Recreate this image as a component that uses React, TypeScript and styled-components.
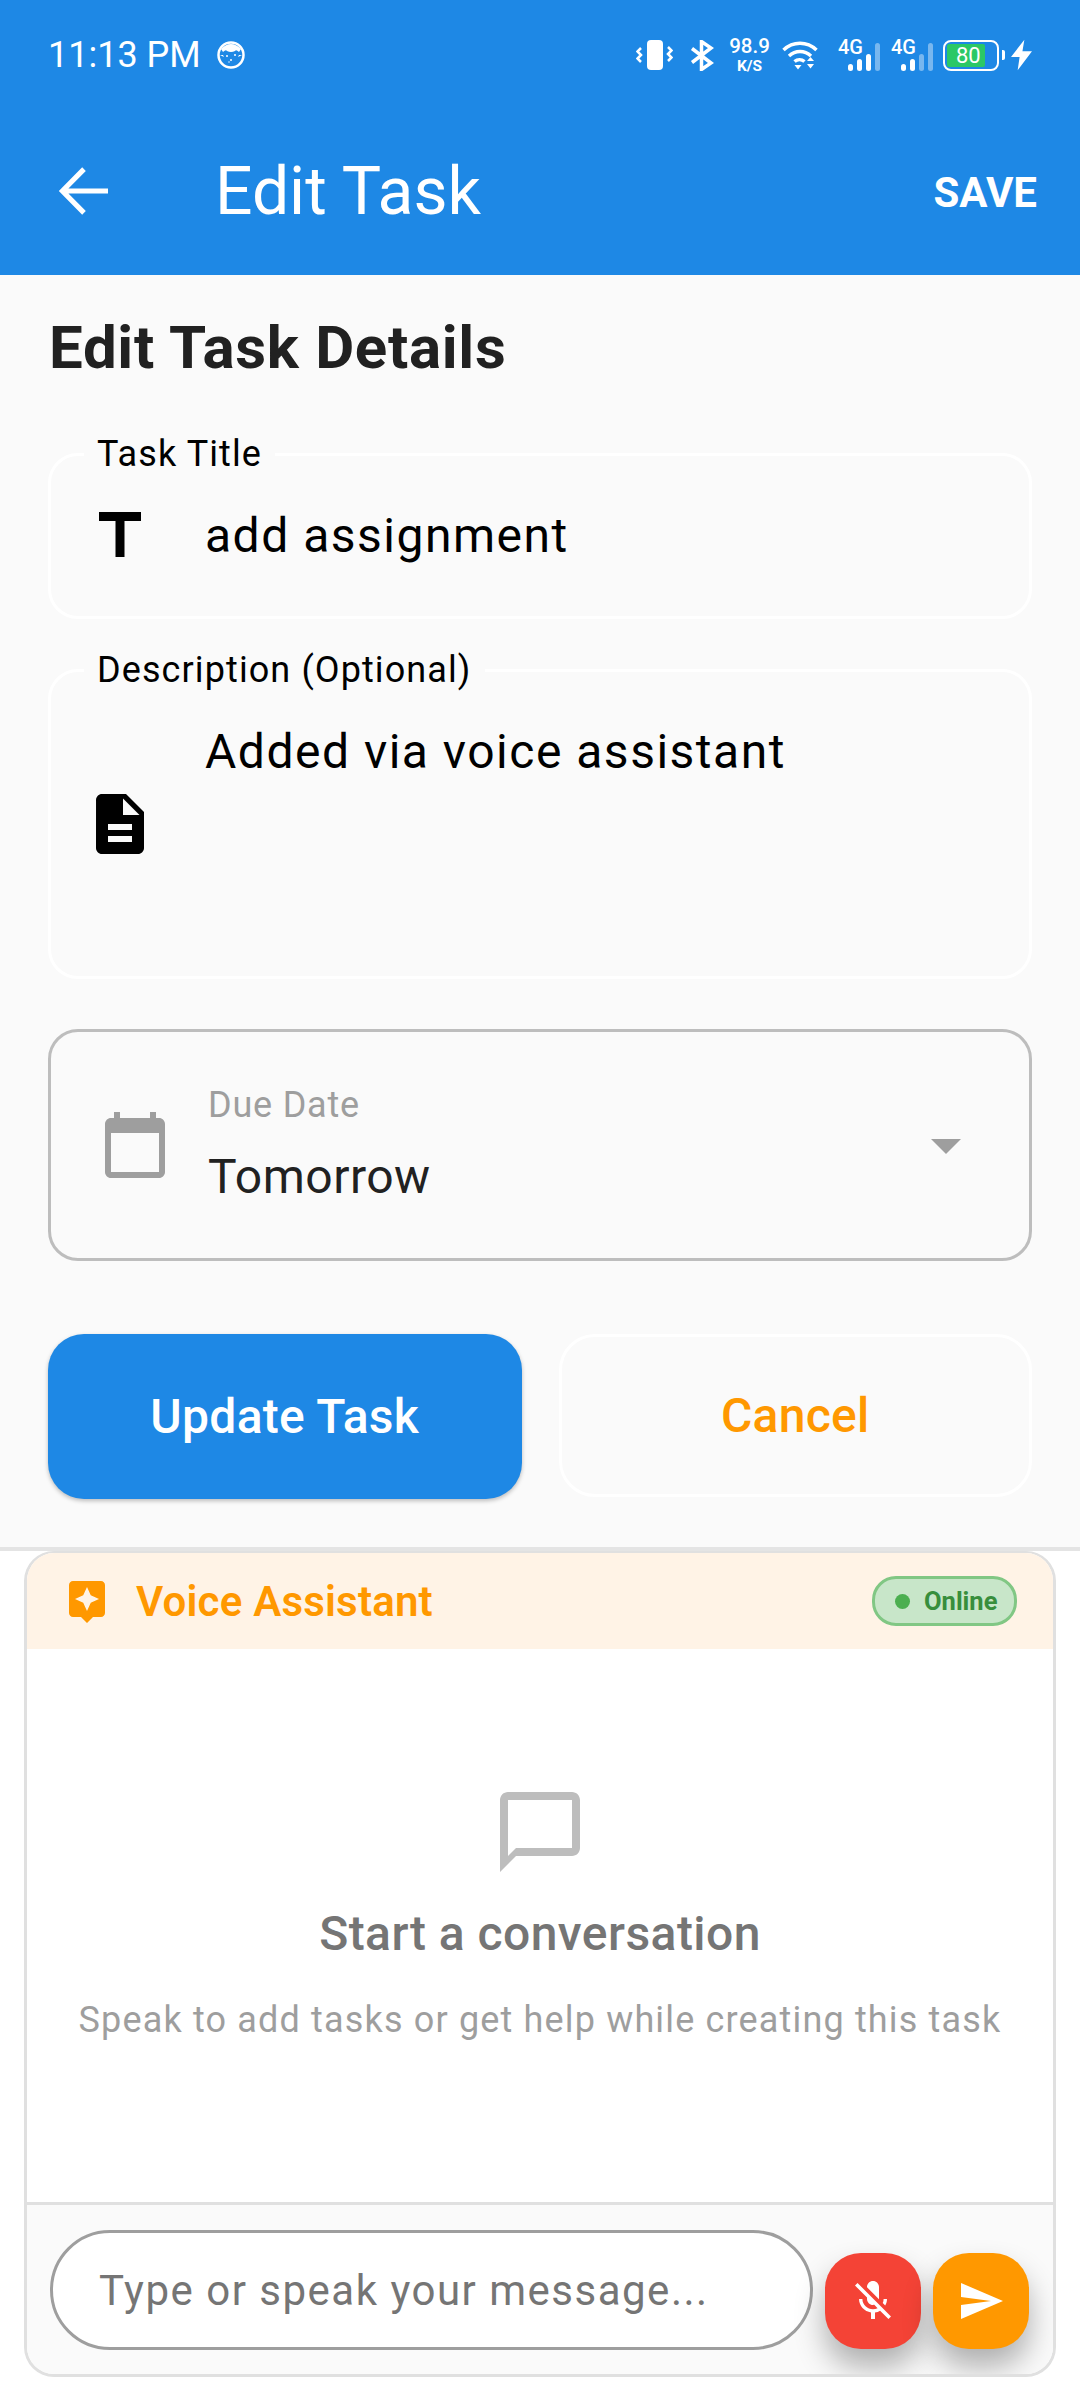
import styled, { createGlobalStyle } from 'styled-components';

const GlobalStyle = createGlobalStyle`
  html, body {
    margin: 0;
    padding: 0;
    background: #ffffff;
    font-family: Roboto, "Liberation Sans", sans-serif;
  }
  * { box-sizing: border-box; }
`;

const S = {
  Page: styled.div`
    width: 1080px;
    height: 2400px;
    display: flex;
    flex-direction: column;
    overflow: hidden;
    background: #ffffff;
  `,
  Header: styled.header`
    height: 275px;
    background: #1e88e5;
    color: #ffffff;
  `,
  StatusBar: styled.div`
    height: 107px;
    padding: 3px 48px 0 48px;
    display: flex;
    align-items: center;
    justify-content: space-between;
  `,
  StatusLeft: styled.div`
    display: flex;
    align-items: center;
    gap: 16px;
  `,
  Time: styled.span`
    font-size: 36px;
  `,
  StatusRight: styled.div`
    display: flex;
    align-items: center;
  `,
  Speed: styled.div`
    width: 39px;
    margin: 0 13px 0 16px;
    display: flex;
    flex-direction: column;
    align-items: center;
    font-weight: 500;
    line-height: 1;
  `,
  SpeedValue: styled.span`
    font-size: 20.5px;
  `,
  SpeedUnit: styled.span`
    font-size: 15.5px;
    font-weight: 700;
    margin-top: 3px;
  `,
  Signal: styled.div<{ $gap: number }>`
    position: relative;
    width: 42px;
    height: 32px;
    margin-left: ${p => p.$gap}px;
  `,
  SignalLabel: styled.span`
    position: absolute;
    top: 0;
    left: 0;
    font-size: 20px;
    font-weight: 500;
    line-height: 17px;
  `,
  Bars: styled.div`
    position: absolute;
    right: 0;
    bottom: 0;
    display: flex;
    align-items: flex-end;
    gap: 4px;
  `,
  Bar: styled.i<{ $height: number; $dim?: boolean }>`
    display: block;
    width: 5px;
    height: ${p => p.$height}px;
    border-radius: 3px;
    background: ${p => (p.$dim ? 'rgba(255,255,255,0.4)' : '#ffffff')};
  `,
  Battery: styled.div`
    width: 56px;
    height: 31px;
    margin-left: 10px;
    padding: 2px;
    border: 2px solid #ffffff;
    border-radius: 8px;
  `,
  BatteryFill: styled.div`
    width: 38px;
    height: 100%;
    padding-left: 9px;
    background: #2bc866;
    border-radius: 2px;
    font-size: 22px;
    line-height: 23px;
  `,
  BatteryNub: styled.i`
    display: block;
    width: 3px;
    height: 10px;
    margin: 0 6px 0 3px;
    border-radius: 0 2px 2px 0;
    background: #ffffff;
  `,
  Toolbar: styled.div`
    height: 168px;
    padding: 0 43px 0 48px;
    display: flex;
    align-items: center;
  `,
  Title: styled.h1`
    flex: 1;
    margin: 0 0 0 95px;
    font-size: 66px;
    font-weight: 400;
  `,
  Save: styled.span`
    margin-top: 2px;
    font-size: 42px;
    font-weight: 700;
  `,
  Form: styled.main`
    height: 1276px;
    padding: 33px 48px 0;
    background: #fafafa;
    border-bottom: 4px solid #e4e4e4;
  `,
  Heading: styled.h2`
    height: 80px;
    margin: 0 0 65px 1px;
    font-size: 60px;
    font-weight: 700;
    line-height: 80px;
    letter-spacing: 0.7px;
    color: #212121;
  `,
  Field: styled.div<{ $height: number }>`
    position: relative;
    height: ${p => p.$height}px;
    margin-bottom: 50px;
    padding: 0 33px;
    display: flex;
    align-items: center;
    gap: 50px;
    border: 3px solid #ffffff;
    border-radius: 30px;
  `,
  FieldLabel: styled.label`
    position: absolute;
    top: -22px;
    left: 33px;
    padding: 0 13px;
    background: #fafafa;
    font-size: 36px;
    line-height: 40px;
    letter-spacing: 1.1px;
    color: #000000;
  `,
  FieldValue: styled.div<{ $top?: boolean }>`
    align-self: ${p => (p.$top ? 'flex-start' : 'center')};
    margin-top: ${p => (p.$top ? '50px' : '0')};
    font-size: 48px;
    line-height: 60px;
    letter-spacing: 1.5px;
    color: #000000;
  `,
  FieldIcon: styled.svg`
    display: block;
    flex: none;
    width: 72px;
    height: 72px;
    margin-right: -1px;
    fill: #000000;
  `,
  Select: styled.div`
    height: 232px;
    margin-bottom: 73px;
    padding: 0 47px 0 48px;
    display: flex;
    align-items: center;
    border: 3px solid #bdbdbd;
    border-radius: 30px;
  `,
  SelectIcon: styled.svg`
    display: block;
    flex: none;
    width: 72px;
    height: 72px;
    fill: #9e9e9e;
  `,
  SelectText: styled.div`
    flex: 1;
    margin-left: 37px;
    display: flex;
    flex-direction: column;
    gap: 24px;
  `,
  SelectLabel: styled.span`
    font-size: 36px;
    line-height: 40px;
    letter-spacing: 0.8px;
    color: #9e9e9e;
  `,
  SelectValue: styled.span`
    font-size: 48px;
    line-height: 56px;
    letter-spacing: 0.5px;
    color: #212121;
  `,
  Actions: styled.div`
    display: grid;
    grid-template-columns: 1fr 1fr;
    gap: 37px;
    align-items: start;
  `,
  UpdateButton: styled.button`
    height: 165px;
    border: 0;
    border-radius: 36px;
    background: #1e88e5;
    box-shadow: 0 2px 4px rgba(0, 0, 0, 0.25);
    font-family: inherit;
    font-size: 48px;
    font-weight: 500;
    letter-spacing: 0.3px;
    color: #ffffff;
  `,
  CancelButton: styled.button`
    height: 163px;
    border: 3px solid #ffffff;
    border-radius: 36px;
    background: transparent;
    font-family: inherit;
    font-size: 48px;
    font-weight: 500;
    letter-spacing: 0.3px;
    color: #ff9800;
  `,
  Panel: styled.section`
    height: 826px;
    margin: 0 24px;
    display: flex;
    flex-direction: column;
    border: 3px solid #e0e0e0;
    border-top-width: 2px;
    border-radius: 30px;
    overflow: hidden;
    background: #ffffff;
  `,
  PanelHeader: styled.div`
    height: 96px;
    padding: 0 36px;
    display: flex;
    align-items: center;
    background: #fff3e6;
  `,
  PanelIcon: styled.svg`
    display: block;
    width: 48px;
    height: 48px;
    fill: #ff9800;
  `,
  PanelTitle: styled.span`
    flex: 1;
    margin-left: 25px;
    font-size: 42px;
    font-weight: 600;
    letter-spacing: 0.2px;
    color: #ff9800;
  `,
  Badge: styled.div`
    width: 145px;
    height: 50px;
    padding-left: 20px;
    display: flex;
    align-items: center;
    gap: 14px;
    border: 3px solid #81c784;
    border-radius: 24px;
    background: #c8e6c9;
    font-size: 25.5px;
    font-weight: 700;
    color: #388e3c;
  `,
  BadgeDot: styled.i`
    display: block;
    width: 15px;
    height: 15px;
    border-radius: 50%;
    background: #4caf50;
  `,
  Empty: styled.div`
    flex: 1;
    padding-top: 135px;
    display: flex;
    flex-direction: column;
    align-items: center;
  `,
  EmptyIcon: styled.svg`
    display: block;
    width: 96px;
    height: 96px;
    fill: #bdbdbd;
  `,
  EmptyTitle: styled.div`
    margin-top: 26px;
    font-size: 48px;
    font-weight: 500;
    line-height: 56px;
    letter-spacing: 0.45px;
    color: #757575;
  `,
  EmptyHint: styled.div`
    margin-top: 36px;
    font-size: 36px;
    line-height: 44px;
    letter-spacing: 1.16px;
    color: #9e9e9e;
  `,
  Composer: styled.div`
    height: 172px;
    padding: 25px 24px 0 23px;
    display: flex;
    align-items: flex-start;
    gap: 12px;
    border-top: 3px solid #e0e0e0;
    background: #fafafa;
  `,
  Input: styled.div`
    flex: 1;
    height: 120px;
    padding-left: 46px;
    display: flex;
    align-items: center;
    border: 3px solid #9e9e9e;
    border-radius: 60px;
    background: #ffffff;
    font-size: 42px;
    letter-spacing: 1.5px;
    color: #757575;
  `,
  RoundButton: styled.button<{ $color: string }>`
    flex: none;
    width: 96px;
    height: 96px;
    margin-top: 23px;
    padding: 0;
    display: flex;
    align-items: center;
    justify-content: center;
    border: 0;
    border-radius: 36px;
    background: ${p => p.$color};
    box-shadow: 0 18px 30px rgba(0, 0, 0, 0.3);
  `,
  ButtonIcon: styled.svg`
    display: block;
    width: 48px;
    height: 48px;
    fill: #ffffff;
  `,
};

const SignalBars = ({ dim }: { dim: number }) => (
  <S.Bars>
    {[7, 12, 17, 28].map((h, i) => (
      <S.Bar key={h} $height={h} $dim={i >= 4 - dim} />
    ))}
  </S.Bars>
);

export default function App() {
  return (
    <S.Page>
      <GlobalStyle />
      <S.Header>
        <S.StatusBar>
          <S.StatusLeft>
            <S.Time>11:13 PM</S.Time>
            <svg width="28" height="28" viewBox="0 0 28 28">
              <circle cx="14" cy="14" r="12.5" fill="none" stroke="#fff" strokeWidth="2.5" />
              <path d="M4 8Q14-2 24 8l-2 3q-3-3-4-1-4 2-8 0-1-2-4 1z" fill="#fff" />
              <path d="M3 14h3l1 2zM25 14h-3l-1 2z" fill="#fff" />
              <circle cx="10" cy="15" r="1" fill="#fff" />
              <circle cx="14" cy="19" r="1" fill="#fff" />
              <circle cx="18" cy="14" r="1" fill="#fff" />
              <circle cx="12" cy="21" r="0.7" fill="#fff" />
            </svg>
          </S.StatusLeft>
          <S.StatusRight>
            <svg width="37" height="30" viewBox="0 0 37 30">
              <rect x="11" y="0" width="16" height="30" rx="4" fill="#fff" />
              <path d="M5 8 1.500 11.500 5 15 1.500 18.500 5 22M32 7l3.500 3.500-3.500 3.500 3.500 3.500-3.500 3.500" fill="none" stroke="#fff" strokeWidth="2.5" />
            </svg>
            <svg width="24" height="31" viewBox="0 0 24 31" style={{ marginLeft: 17 }}>
              <path d="M2 8.500 21 23l-9.500 6.500V1.500L21 8 2 22.500" fill="none" stroke="#fff" strokeWidth="3.5" />
            </svg>
            <S.Speed>
              <S.SpeedValue>98.9</S.SpeedValue>
              <S.SpeedUnit>K/S</S.SpeedUnit>
            </S.Speed>
            <svg width="36" height="30" viewBox="0 0 36 30">
              <path d="M1.500 10C11 1 25 1 34.500 10M7 16c6.500-6 15.500-6 22 0M12.500 21.500c3-2.500 7-2.500 10 0" fill="none" stroke="#fff" strokeWidth="3.5" />
              <path d="M12.500 25h7l-3.500 4.500zM25 21l3.500-4 3.500 4zM25 24h7l-3.500 4.500z" fill="#fff" />
            </svg>
            <S.Signal $gap={20}>
              <S.SignalLabel>4G</S.SignalLabel>
              <SignalBars dim={1} />
            </S.Signal>
            <S.Signal $gap={11}>
              <S.SignalLabel>4G</S.SignalLabel>
              <SignalBars dim={2} />
            </S.Signal>
            <S.Battery>
              <S.BatteryFill>80</S.BatteryFill>
            </S.Battery>
            <S.BatteryNub />
            <svg width="21" height="32" viewBox="0 0 22 32">
              <path d="M14 0 0 18h9L7 32 22 12h-10z" fill="#fff" />
            </svg>
          </S.StatusRight>
        </S.StatusBar>
        <S.Toolbar>
          <svg width="72" height="72" viewBox="0 0 24 24" fill="none" stroke="#fff" strokeWidth="1.7">
            <path d="M20 12H5.500M12 4.700 4.800 12l7.200 7.300" />
          </svg>
          <S.Title>Edit Task</S.Title>
          <S.Save>SAVE</S.Save>
        </S.Toolbar>
      </S.Header>

      <S.Form>
        <S.Heading>Edit Task Details</S.Heading>
        <S.Field $height={166}>
          <S.FieldLabel>Task Title</S.FieldLabel>
          <S.FieldIcon viewBox="0 0 24 24">
            <path d="M5 4v3h5.500v12h3V7H19V4z" />
          </S.FieldIcon>
          <S.FieldValue>add assignment</S.FieldValue>
        </S.Field>
        <S.Field $height={310}>
          <S.FieldLabel>Description (Optional)</S.FieldLabel>
          <S.FieldIcon viewBox="0 0 24 24">
            <path d="M14 2H6c-1.100 0-1.990.9-1.990 2L4 20c0 1.100.89 2 1.990 2H18c1.100 0 2-.9 2-2V8l-6-6zm2 16H8v-2h8v2zm0-4H8v-2h8v2zm-3-5V3.500L18.500 9H13z" />
          </S.FieldIcon>
          <S.FieldValue $top>Added via voice assistant</S.FieldValue>
        </S.Field>
        <S.Select>
          <S.SelectIcon viewBox="0 0 24 24">
            <path d="M20 3h-1V1h-2v2H7V1H5v2H4c-1.100 0-2 .9-2 2v16c0 1.100.9 2 2 2h16c1.100 0 2-.9 2-2V5c0-1.100-.9-2-2-2zm0 18H4V8h16v13z" />
          </S.SelectIcon>
          <S.SelectText>
            <S.SelectLabel>Due Date</S.SelectLabel>
            <S.SelectValue>Tomorrow</S.SelectValue>
          </S.SelectText>
          <S.SelectIcon viewBox="0 0 24 24">
            <path d="M7 10l5 5 5-5z" />
          </S.SelectIcon>
        </S.Select>
        <S.Actions>
          <S.UpdateButton>Update Task</S.UpdateButton>
          <S.CancelButton>Cancel</S.CancelButton>
        </S.Actions>
      </S.Form>

      <S.Panel>
        <S.PanelHeader>
          <S.PanelIcon viewBox="0 0 24 24">
            <path d="M19 2H5c-1.100 0-2 .9-2 2v14c0 1.100.9 2 2 2h4l3 3 3-3h4c1.100 0 2-.9 2-2V4c0-1.100-.9-2-2-2zm-5.120 10.880L12 17l-1.880-4.120L6 11l4.120-1.880L12 5l1.880 4.120L18 11l-4.120 1.880z" />
          </S.PanelIcon>
          <S.PanelTitle>Voice Assistant</S.PanelTitle>
          <S.Badge>
            <S.BadgeDot />
            Online
          </S.Badge>
        </S.PanelHeader>
        <S.Empty>
          <S.EmptyIcon viewBox="0 0 24 24">
            <path d="M20 2H4c-1.100 0-2 .9-2 2v18l4-4h14c1.100 0 2-.9 2-2V4c0-1.100-.9-2-2-2zm0 14H6l-2 2V4h16v12z" />
          </S.EmptyIcon>
          <S.EmptyTitle>Start a conversation</S.EmptyTitle>
          <S.EmptyHint>Speak to add tasks or get help while creating this task</S.EmptyHint>
        </S.Empty>
        <S.Composer>
          <S.Input>Type or speak your message...</S.Input>
          <S.RoundButton $color="#f44336">
            <S.ButtonIcon viewBox="0 0 24 24">
              <path d="M19 11h-1.700c0 .74-.16 1.430-.43 2.050l1.230 1.230c.56-.98.9-2.090.9-3.280zm-4.020.17c0-.06.02-.11.02-.17V5c0-1.660-1.340-3-3-3S9 3.340 9 5v.18l5.980 5.990zM4.270 3 3 4.270l6.010 6.010V11c0 1.660 1.330 3 2.990 3 .22 0 .44-.03.65-.08l1.660 1.660c-.71.33-1.500.52-2.310.52-2.760 0-5.300-2.100-5.300-5.100H5c0 3.410 2.720 6.230 6 6.720V21h2v-3.280c.91-.13 1.770-.45 2.540-.9L19.730 21 21 19.730 4.270 3z" />
            </S.ButtonIcon>
          </S.RoundButton>
          <S.RoundButton $color="#ff9800">
            <S.ButtonIcon viewBox="0 0 24 24">
              <path d="M2.010 21 23 12 2.010 3 2 10l15 2-15 2z" />
            </S.ButtonIcon>
          </S.RoundButton>
        </S.Composer>
      </S.Panel>
    </S.Page>
  );
}
